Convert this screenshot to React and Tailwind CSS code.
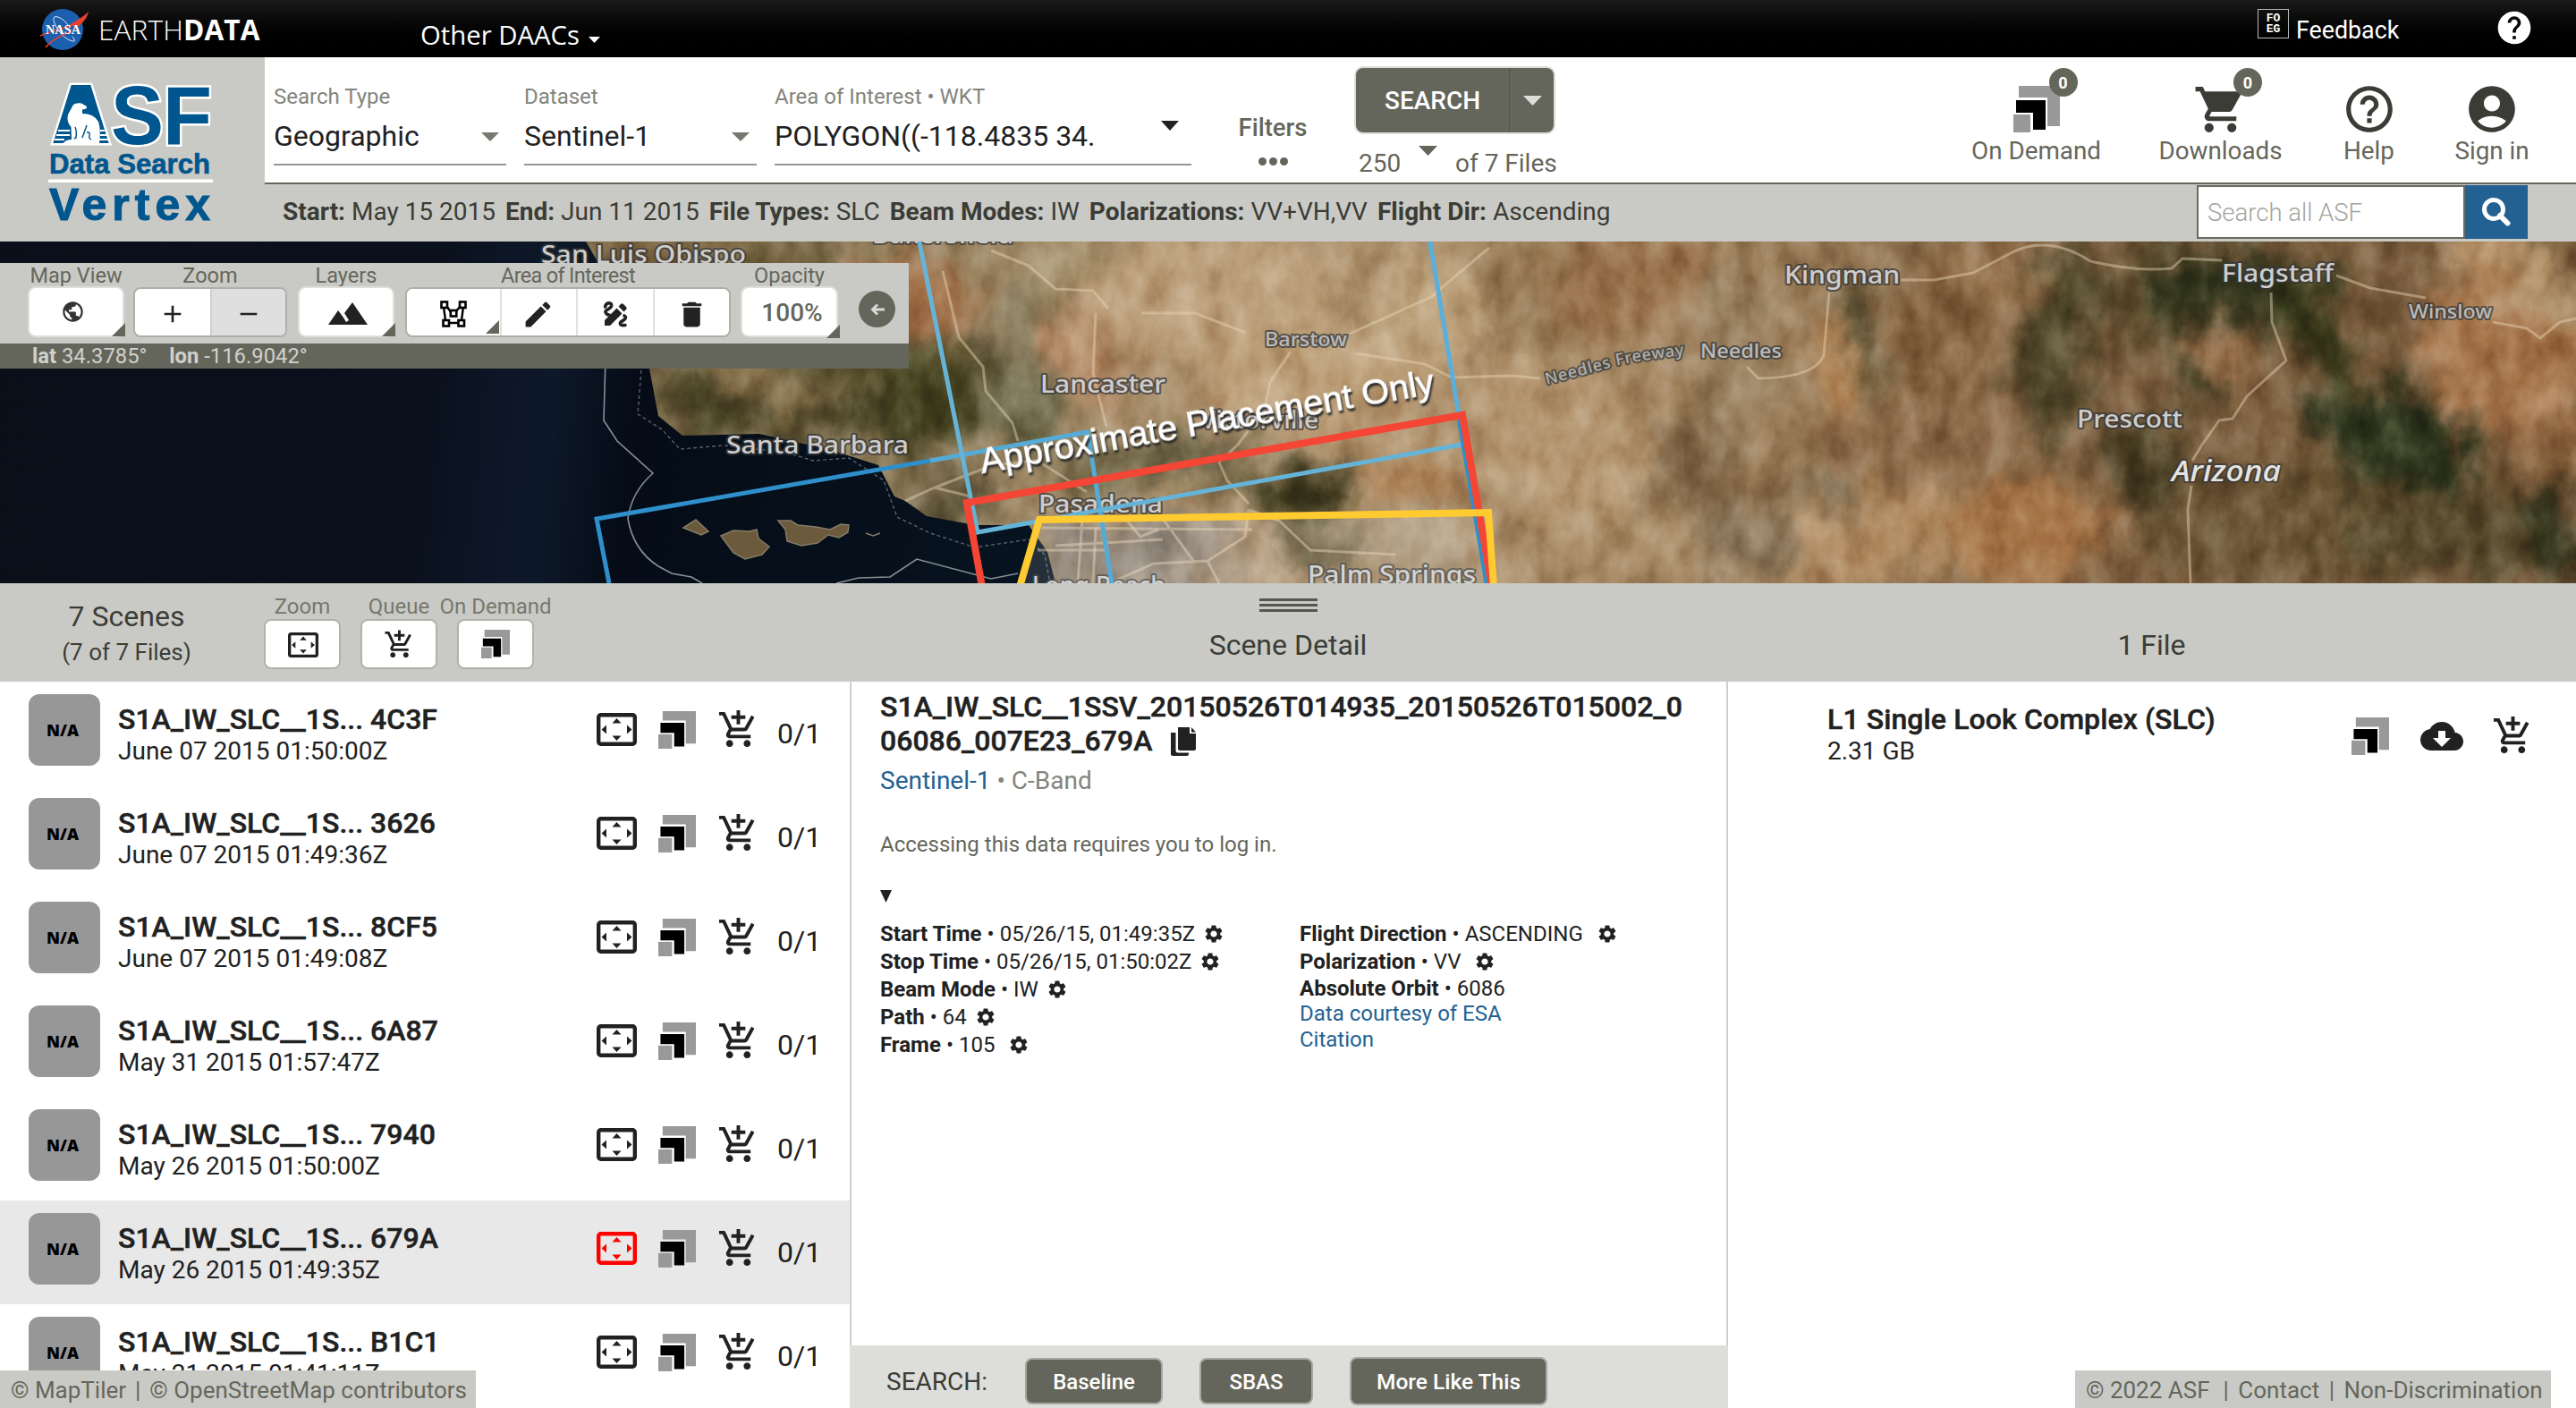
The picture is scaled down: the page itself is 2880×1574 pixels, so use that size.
import React from "react";
import {
  MdShoppingCart,
  MdHelpOutline,
  MdHelp,
  MdAccountCircle,
  MdPublic,
  MdAdd,
  MdRemove,
  MdEdit,
  MdDelete,
  MdSettings,
  MdCloudDownload,
  MdAddShoppingCart,
} from "react-icons/md";

function Caret({ className = "", w = 20, h = 11 }) {
  return (
    <svg className={className} width={w} height={h} viewBox="0 0 20 10" preserveAspectRatio="none">
      <path d="M0 0H20L10 10Z" fill="currentColor" />
    </svg>
  );
}

function OnDemandIcon({ size = 43 }) {
  return (
    <svg width={size} height={size} viewBox="0 0 52 52">
      <path d="M6 0H52V45H38V13H6Z" fill="#999" />
      <path d="M3 16H36V49H22V30H3Z" fill="#000" />
      <path d="M0 32H19V52H0Z" fill="#999" />
    </svg>
  );
}

function ZoomIcon({ width = 45, className = "" }) {
  return (
    <svg width={width} viewBox="0 0 45 37" className={`shrink-0 ${className}`}>
      <rect x="2.200" y="2.200" width="40.600" height="32.600" rx="2.500" fill="none" stroke="currentColor" strokeWidth="4.400" />
      <path d="M17.500 11.500L22.500 6L27.500 11.500ZM17.500 25.500H27.500L22.500 31ZM11 13.500V23.500L5.500 18.500ZM34 13.500V23.500L39.500 18.500Z" fill="currentColor" />
    </svg>
  );
}

function PolygonIcon() {
  return (
    <svg width="30" height="30" viewBox="0 0 30 30" fill="none" stroke="#000" strokeWidth="2.6">
      <path d="M8 7L12 13M22 7L18 12M4 7L6 22M26 7L24 22M8 25H21" strokeWidth="2.4" />
      <rect x="1.5" y="1.5" width="6.5" height="6.5" fill="#fff" />
      <rect x="22" y="1.5" width="6.5" height="6.5" fill="#fff" />
      <rect x="11.8" y="11" width="6.5" height="6.5" fill="#fff" />
      <rect x="3.5" y="22" width="6.5" height="6.5" fill="#fff" />
      <rect x="20.5" y="22" width="6.5" height="6.5" fill="#fff" />
    </svg>
  );
}

function DrawEditIcon() {
  return (
    <svg width="30" height="30" viewBox="0 0 30 30">
      <path d="M3.500 7C5 1 12 2 10.500 6.500C9 10 3 10 4 13Q5 16 8 16M25 17C29 19 24 22 21 24C19 27 22 28 26 27.500" fill="none" stroke="#222" strokeWidth="3.6" strokeLinecap="round" />
      <path d="M3 22L16.500 8.500L22.500 14.500L9 28H3ZM18.500 6.500L21 4Q22.500 2.500 24 4L27 7Q28.500 8.500 27 10L24.500 12.500Z" fill="#222" />
    </svg>
  );
}

function CopyIcon() {
  return (
    <svg width="28" height="32" viewBox="0 0 28 32" fill="#212121">
      <path d="M8 0H21V7H28V24Q28 26 26 26H10Q8 26 8 24Z" />
      <path d="M23 0L28 5.500H23Z" />
      <path d="M0 6H5.500V26Q5.500 28.500 8 28.500H20V30Q20 32 18 32H2Q0 32 0 30Z" />
    </svg>
  );
}

function NasaLogo() {
  return (
    <svg className="ml-[44px] mt-[9px] shrink-0" width="56" height="48" viewBox="0 0 56 48">
      <circle cx="26" cy="24" r="23" fill="#1c5fae" />
      <path d="M37 32Q42 38 37 37Q28 35 20 23Q12 9 19 9.500Q27 11 34 22" fill="none" stroke="#dfe9f5" strokeWidth="1" />
      <path d="M7 44C13 36 25 30 36 26" fill="none" stroke="#e6422e" strokeWidth="1.600" />
      <path d="M30 21C42 14 50 9 55 4C53 13 46 20 35 26C42 20 40 19 30 21Z" fill="#e6422e" />
      <path d="M1 31C12 26 22 24 34 20" stroke="#e6422e" strokeWidth="1.500" fill="none" />
      <text x="26.500" y="28.500" textAnchor="middle" textLength="39" lengthAdjust="spacingAndGlyphs" fontFamily="Liberation Serif, serif" fontWeight="700" fontSize="14" fill="#fff">NASA</text>
    </svg>
  );
}

function AsfLogo() {
  return (
    <svg width="296" height="206" viewBox="0 64 296 206" fontFamily="Liberation Sans, Arial, sans-serif" fontWeight="700">
      <path d="M79 94H102L123 161H58Z" fill="#fff" stroke="#fff" strokeWidth="3" />
      <g fill="#00568f">
        <text x="60" y="161" fontSize="92" textLength="62" lengthAdjust="spacingAndGlyphs">A</text>
        <path d="M79 94H102L123 161H58Z" stroke="#fff" strokeWidth="2" />
        <g fontSize="93" stroke="#fff" strokeWidth="5" paintOrder="stroke">
          <text x="124" y="161" textLength="59" lengthAdjust="spacingAndGlyphs">S</text>
          <text x="182" y="161" textLength="55" lengthAdjust="spacingAndGlyphs">F</text>
        </g>
        <text x="55" y="193.500" fontSize="31" textLength="180" lengthAdjust="spacingAndGlyphs" stroke="#00568f" strokeWidth="0.600">Data Search</text>
        <text x="55" y="245.500" fontSize="50" textLength="180" lengthAdjust="spacing" stroke="#00568f" strokeWidth="1">Vertex</text>
      </g>
      <path d="M65 146H78M63 151H78M61 156H72M112 146H117M112 151H119M110 156H121" stroke="#fff" strokeWidth="1.800" />
      <path d="M82 117Q85 114.500 91 115.500L97 119Q98 122 92 122.500V127Q105 127 110 136Q113 145 111 161H70Q73 156 80 156L79.500 142Q74 136 76 128Z" fill="#fff" />
      <path d="M84 142Q86 147 85 154L83 155M97 140L92 154M97 148Q101 147 100 152Q99 155 102 156" stroke="#00568f" strokeWidth="1.500" fill="none" />
      <rect x="54" y="200.500" width="184" height="3.500" fill="#fff" />
    </svg>
  );
}

const mapLabels = [
  ["San Luis Obispo", 605, 24, 229, 27],
  ["Santa Barbara", 812, 237, 204, 27],
  ["Bakersfield", 975, 2, 158, 27],
  ["Lancaster", 1163, 169, 140, 27],
  ["Barstow", 1414, 117, 92, 22],
  ["Victorville", 1342, 209, 132, 27],
  ["Pasadena", 1161, 303, 139, 27],
  ["Long Beach", 1154, 394, 149, 27],
  ["Palm Springs", 1462, 382, 188, 27],
  ["Needles", 1901, 130, 91, 22],
  ["Kingman", 1995, 47, 129, 27],
  ["Flagstaff", 2484, 45, 125, 27],
  ["Winslow", 2693, 86, 93, 22],
  ["Prescott", 2322, 208, 118, 27],
];

// [cx, cy, rx, ry, colour, rotation]
const terrain = [
  [800, 40, 160, 60, "#7c6542", 20],
  [950, 100, 190, 60, "#5d5330", 20],
  [900, 190, 170, 34, "#4a4425", 5],
  [860, 160, 70, 22, "#86704a", 30],
  [1010, 60, 90, 50, "#a07049", 0],
  [1030, 190, 60, 60, "#43401f", 0],
  [1060, 290, 60, 22, "#5b5338", 0],
  [1150, 100, 40, 60, "#857a5c", 30],
  [1180, 30, 60, 40, "#9f8a66", 0],
  [1140, 190, 60, 50, "#6d6849", 30],
  [1220, 120, 60, 60, "#b38b67", 0],
  [1350, 60, 150, 70, "#b99c77", 0],
  [1480, 150, 150, 60, "#b99b74", 0],
  [1290, 245, 110, 22, "#676042", -10],
  [1400, 270, 60, 20, "#69603f", -5],
  [1470, 280, 60, 30, "#3d391d", -8],
  [1580, 270, 60, 40, "#ad8459", 0],
  [1280, 350, 110, 45, "#85796b", 0],
  [1480, 345, 60, 22, "#5e5334", 10],
  [1590, 340, 60, 30, "#a99577", 0],
  [1600, 70, 60, 60, "#bca27c", 0],
  [1720, 60, 60, 70, "#92744f", 20],
  [1830, 50, 100, 60, "#97704a", 0],
  [1740, 220, 110, 90, "#b3956f", 30],
  [1890, 260, 40, 90, "#806646", 15],
  [1940, 110, 50, 100, "#9c8463", 0],
  [1860, 340, 110, 40, "#a98c67", 0],
  [2080, 100, 16, 75, "#4c4529", -10],
  [2060, 170, 28, 70, "#b08355", -15],
  [2180, 120, 60, 90, "#84613e", 0],
  [2300, 110, 36, 110, "#4d4528", 10],
  [2240, 40, 60, 30, "#94704b", 20],
  [2400, 60, 60, 70, "#5d4b2c", -20],
  [2490, 55, 90, 50, "#2f321a", 10],
  [2480, 130, 30, 50, "#98704b", 0],
  [2600, 110, 30, 100, "#363719", -25],
  [2450, 160, 16, 40, "#39391f", -20],
  [2680, 225, 100, 55, "#2c331b", 25],
  [2810, 120, 110, 90, "#a5744a", 30],
  [2790, 20, 60, 40, "#b8946a", 30],
  [2860, 60, 50, 36, "#a98a62", 0],
  [2400, 250, 40, 50, "#4a3f24", 0],
  [2150, 220, 110, 50, "#8e6c4b", 0],
  [2080, 330, 140, 50, "#b08a60", -10],
  [2270, 320, 80, 60, "#a47245", 0],
  [2040, 280, 40, 20, "#7c694d", 20],
  [2560, 320, 160, 70, "#6a5434", 0],
  [2740, 330, 110, 50, "#514427", 0],
  [2860, 330, 30, 50, "#2f301a", 0],
  [2860, 230, 60, 30, "#8f6741", 0],
  [1960, 330, 60, 50, "#8b7558", 0],
];

const roads = [
  "M2125 43L2162 43L2206 35L2250 12Q2290 -8 2337 22Q2387 34 2428 30L2440 19L2484 21",
  "M2612 38L2650 52L2712 63",
  "M2787 90L2825 97L2840 108L2862 90L2880 86",
  "M2539 57L2540 90L2556 133L2512 173L2496 198L2481 200L2462 227L2451 245",
  "M2450 273L2446 300L2449 382",
  "M2045 57L2039 127Q2030 152 1966 153L1953 140",
  "M1509 103L1600 62L1629 37L1665 7",
  "M1515 125L1593 137L1623 152L1689 150L1722 153",
  "M1108 10L1150 27L1180 53L1222 55L1239 75",
  "M1054 33L1072 107L1099 140L1102 167L1132 203L1138 223",
  "M1225 80L1222 147L1237 207",
  "M1276 80L1336 80L1393 102",
  "M1443 123L1420 157L1414 187L1384 227L1363 247L1372 267L1396 293",
  "M1165 320L1400 322M1210 310L1205 382M1160 345H1240M1300 310L1335 358L1350 357M1240 382L1290 360L1350 357L1392 330L1396 300M1350 357L1363 382M1396 300L1430 312L1465 345L1560 350",
  "M1012 290L1045 275L1085 285M1045 275L1110 250L1160 245L1215 280M1180 340L1300 333M1225 320L1222 382M1260 312L1275 330L1295 322",
];

function MapView() {
  return (
    <svg className="block" width="2880" height="382" viewBox="0 0 2880 382">
      <defs>
        <linearGradient id="ocean" x1="0" x2="1" y1="0" y2="0.030">
          <stop offset="0" stopColor="#0b0f1a" />
          <stop offset="0.380" stopColor="#0a101c" />
          <stop offset="0.440" stopColor="#0d1626" />
          <stop offset="0.490" stopColor="#0d1828" />
          <stop offset="0.560" stopColor="#050c17" />
          <stop offset="1" stopColor="#071521" />
        </linearGradient>
        <linearGradient id="land" x1="0" x2="1" y1="0" y2="0">
          <stop offset="0" stopColor="#6b5b3a" />
          <stop offset="0.200" stopColor="#8c7957" />
          <stop offset="0.350" stopColor="#b09470" />
          <stop offset="0.550" stopColor="#a1835e" />
          <stop offset="0.750" stopColor="#7b5e3e" />
          <stop offset="1" stopColor="#735637" />
        </linearGradient>
        <clipPath id="coast">
          <path d="M655 0L690 60L726 142L736 195L763 217L849 215L929 233L982 250L1000 285L1012 290L1036 307L1090 317L1150 317L1171 347L1180 382H2880V0Z" />
        </clipPath>
        <filter id="warp" filterUnits="userSpaceOnUse" x="560" y="-60" width="2380" height="500" colorInterpolationFilters="sRGB">
          <feGaussianBlur in="SourceGraphic" stdDeviation="14" result="b" />
          <feTurbulence type="fractalNoise" baseFrequency="0.018 0.015" numOctaves="6" seed="8" result="n" />
          <feDisplacementMap in="b" in2="n" scale="80" xChannelSelector="R" yChannelSelector="G" />
        </filter>
        <filter id="relief" x="0" y="0" width="100%" height="100%" colorInterpolationFilters="sRGB">
          <feTurbulence type="fractalNoise" baseFrequency="0.032 0.020" numOctaves="6" seed="11" />
          <feColorMatrix values="1.400 0 0 0 -0.150  1.400 0 0 0 -0.150  1.400 0 0 0 -0.150  0 0 0 0 1" />
        </filter>
      </defs>
      <rect width="1300" height="382" fill="url(#ocean)" />
      <g clipPath="url(#coast)">
        <rect x="600" width="2280" height="382" fill="url(#land)" />
        <g filter="url(#warp)">
          <rect x="500" y="-100" width="2500" height="600" fill="url(#land)" />
          {terrain.map(([cx, cy, rx, ry, c, r], i) => (
            <ellipse key={i} cx={cx} cy={cy} rx={rx} ry={ry} fill={c} transform={`rotate(${r} ${cx} ${cy})`} />
          ))}
        </g>
        <rect x="600" width="2280" height="382" filter="url(#relief)" className="mix-blend-soft-light" opacity="0.500" />
      </g>
      <g fill="none" stroke="#e8d5b5" strokeOpacity="0.450" strokeWidth="3" strokeLinejoin="round">
        {roads.map((d) => (
          <path key={d} d={d} />
        ))}
      </g>
      <g fill="#6b5a3c" stroke="#857b68" strokeWidth="1.500">
        <path d="M764 320L778 311L792 324L784 328Z" />
        <path d="M806 329L820 323L838 324L846 322L848 332L860 341L852 350L833 355L820 348Z" />
        <path d="M870 312L884 312L892 317L912 319L928 322L940 316L949 317L948 325L938 331L926 328L914 337L896 340L880 335L878 322Z" />
        <path d="M968 326L976 329L984 326" fill="none" />
      </g>
      <path d="M677 130L675 200L690 223L730 259Q706 280 702 310Q708 345 736 363L751 371L773 375L785 382M935 382L960 376L995 375L1025 355L1108 377L1138 371" fill="none" stroke="#868f95" strokeWidth="1.600" />
      <path d="M718 130L713 193L740 210L760 232L809 228L880 236L909 245L949 242L988 267L1003 308L1040 326L1090 342L1150 333L1168 350L1174 382" fill="none" stroke="#8d9aa3" strokeWidth="1.400" strokeDasharray="4 3" opacity="0.600" />

      <g fill="#d4d2d0" stroke="#35373a" strokeOpacity="0.700" strokeWidth="4" strokeLinejoin="round" paintOrder="stroke" fontFamily="Noto Sans, Open Sans, sans-serif" fontWeight="500">
        {mapLabels.map(([t, x, y, w, s]) => (
          <text key={t} x={x} y={y} fontSize={s} textLength={w} lengthAdjust="spacingAndGlyphs" fill={s < 25 ? "#b9bab9" : "#cfcdcb"}>
            {t}
          </text>
        ))}
        <text x="2428" y="268" fontSize="33" fontStyle="italic" textLength="122" lengthAdjust="spacingAndGlyphs" fill="#e6e4e2">Arizona</text>
        <path id="freeway" d="M1729 160Q1790 144 1810 138Q1840 132 1890 126" fill="none" stroke="none" />
        <text fontSize="18" fill="#aeb0ad">
          <textPath href="#freeway" textLength="158">Needles Freeway</textPath>
        </text>
      </g>

      <path d="M1162 310L1664 302L1670 382H1141Z" fill="#fff" opacity="0.120" />
      <g fill="none" strokeWidth="5">
        <path d="M681 382L667 310L1040 245" stroke="#2f8fcb" />
        <path d="M1040 245L1216 213L1243 382" stroke="#56abd6" />
        <path d="M1027 -4L1093 325L1634 227" stroke="#66b3d8" />
        <path d="M1598 -4L1632 200" stroke="#5aafdc" />
        <path d="M1631 197L1662 382" stroke="#2f8fcb" />
      </g>
      <path d="M1098 386L1081 292L1635 194L1668 386" fill="none" stroke="#f44535" strokeWidth="8" />
      <path d="M1140 386L1162 311L1664 303L1670 386" fill="none" stroke="#ffcb30" strokeWidth="8" />
      <g fontFamily="Liberation Sans, Helvetica, sans-serif" fontSize="38">
        <text transform="translate(1098 259) rotate(-10)" textLength="515" lengthAdjust="spacingAndGlyphs" fill="#fff" stroke="#fff" strokeWidth="0.800" className="[filter:drop-shadow(1px_3px_1px_#222)]">
          Approximate Placement Only
        </text>
      </g>
    </svg>
  );
}

function TopBar() {
  return (
    <div className="flex h-[64px] bg-gradient-to-b from-[#1a1a1a] to-black text-white font-['Open_Sans',sans-serif]">
      <NasaLogo />
      <div className="ml-[10px] w-[360px] text-[31.5px] leading-[66px] whitespace-nowrap tracking-[0.150px]">
        <span className="font-light">EARTH</span>
        <span className="font-bold">DATA</span>
      </div>
      <div className="flex">
        <span className="w-[178px] text-[29.3px] leading-[78px] whitespace-nowrap">Other DAACs</span>
        <Caret className="ml-[10px] mt-[41px]" w={13} h={7} />
      </div>
      <div className="ml-auto flex pr-[47px] font-[Roboto,sans-serif]">
        <div className="mt-[10px] flex h-[33px] w-[35px] flex-col items-center justify-center border border-[#bbb] font-['Liberation_Mono',monospace] text-[13px] font-bold leading-[12px]">
          <span>FO</span>
          <span>EG</span>
        </div>
        <span className="ml-[8px] w-[222px] text-[26.800px] leading-[69px]">Feedback</span>
        <MdHelp className="mt-[9px]" size={44} />
      </div>
    </div>
  );
}

function Field({ label, value, className = "", children }) {
  return (
    <div className={`h-[121px] border-b-2 border-[#969791] pt-[28px] ${className}`}>
      <div className="whitespace-nowrap text-[24px] leading-[32px] text-[#83847d]">{label}</div>
      <div className="mt-[8px] flex h-[40px]">
        <span className="overflow-hidden whitespace-nowrap text-[32px] leading-[40px] text-[#212121]">{value}</span>
        {children}
      </div>
    </div>
  );
}

function NavItem({ label, className, badge, children }) {
  return (
    <div className={`flex flex-col items-center text-[#3b3c36] ${className}`}>
      <div className="relative mt-[28px] flex h-[60px] items-center justify-center">
        {children}
        {badge && (
          <span className="absolute -right-[20px] -top-[16px] flex h-[32px] w-[32px] items-center justify-center rounded-full bg-[#65665b] text-[18px] font-bold text-white">0</span>
        )}
      </div>
      <span className="whitespace-nowrap text-[27.800px] leading-[33px] text-[#65665b]">{label}</span>
    </div>
  );
}

const filters = [
  ["Start:", "May 15 2015"],
  ["End:", "Jun 11 2015"],
  ["File Types:", "SLC"],
  ["Beam Modes:", "IW"],
  ["Polarizations:", "VV+VH,VV"],
  ["Flight Dir:", "Ascending"],
];

function Header() {
  return (
    <div className="flex h-[206px] bg-[#c9cac5]">
      <div className="w-[296px] shrink-0">
        <AsfLogo />
      </div>
      <div className="flex w-[2584px] flex-col">
        <div className="flex h-[142px] border-b-2 border-[#65665b] bg-white pl-[10px]">
          <Field label="Search Type" value="Geographic" className="w-[260px]">
            <Caret className="ml-auto mr-[8px] mt-[16px] text-[#77786f]" w={20} h={10} />
          </Field>
          <Field label="Dataset" value="Sentinel-1" className="ml-[20px] w-[260px]">
            <Caret className="ml-auto mr-[8px] mt-[16px] text-[#77786f]" w={20} h={10} />
          </Field>
          <Field label="Area of Interest • WKT" value={<span className="block w-[359px] overflow-hidden">POLYGON((-118.4835 34.</span>} className="ml-[20px] w-[466px]">
            <Caret className="ml-auto mr-[14px] mt-[3px] text-[#212121]" w={20} h={11} />
          </Field>
          <div className="ml-[52px] flex w-[78px] flex-col items-center pt-[62px] text-[#65665b]">
            <span className="text-[27.5px] font-medium leading-[33px]">Filters</span>
            <div className="mt-[17px] flex gap-[3px]">
              <i className="h-[9px] w-[9px] rounded-full bg-[#65665b]" />
              <i className="h-[9px] w-[9px] rounded-full bg-[#65665b]" />
              <i className="h-[9px] w-[9px] rounded-full bg-[#65665b]" />
            </div>
          </div>
          <div className="ml-[54px] w-[230px] pt-[12px]">
            <div className="flex h-[72px] w-[221px] items-center overflow-hidden rounded-[8px] bg-[#65665b] text-white shadow-[0_0_0_2px_#dcdcd8]">
              <span className="flex h-full w-[172px] items-center justify-center border-r border-[#54554b] pt-[1px] text-[28px] font-medium">SEARCH</span>
              <Caret className="ml-[15px] text-[#deded9]" w={21} h={11} />
            </div>
            <div className="mt-[18px] flex pl-[3px] text-[28px] leading-[33px] text-[#65665b]">
              <span className="w-[67px]">250</span>
              <Caret className="-mt-[3px]" w={21} h={11} />
              <span className="ml-[20px] whitespace-nowrap">of 7 Files</span>
            </div>
          </div>
          <div className="ml-auto flex pr-[53px]">
            <NavItem label="On Demand" className="mr-[65px] w-[145px]" badge>
              <OnDemandIcon size={52} />
            </NavItem>
            <NavItem label="Downloads" className="mr-[70px] w-[137px]" badge>
              <MdShoppingCart size={61} className="-mx-[4px]" />
            </NavItem>
            <NavItem label="Help" className="mr-[69px] w-[55px]">
              <MdHelpOutline size={62} />
            </NavItem>
            <NavItem label="Sign in" className="w-[82px]">
              <MdAccountCircle size={62} />
            </NavItem>
          </div>
        </div>
        <div className="flex h-[64px] pl-[20px] pr-[54px]">
          <div className="whitespace-nowrap text-[28px] leading-[61px] text-[#3b3c36]">
            {filters.map(([k, v]) => (
              <span key={k} className="mr-[11px]">
                <b className="font-bold">{k}</b> {v}
              </span>
            ))}
          </div>
          <div className="ml-auto mt-[1px] flex h-[60px] w-[370px]">
            <div className="w-[300px] border-2 border-[#6a6b65] bg-white pl-[10px] text-[27.500px] font-light leading-[57px] text-[#a3a49e]">Search all ASF</div>
            <div className="flex w-[70px] items-center justify-center bg-[#236192]">
              <svg width="32" height="32" viewBox="0 0 32 32" fill="none" stroke="#fff">
                <circle cx="13" cy="13" r="10.500" strokeWidth="5" />
                <path d="M20 20L28.500 28.500" strokeWidth="6" strokeLinecap="round" />
              </svg>
            </div>
          </div>
        </div>
      </div>
    </div>
  );
}

function Corner({ className }) {
  return (
    <svg className={`absolute ${className}`} width="15" height="15" viewBox="0 0 15 15">
      <path d="M15 0V15H0Z" fill="#65665b" />
    </svg>
  );
}

function ToolColumn({ label, className, labelClass = "", children }) {
  return (
    <div className={`flex flex-col items-center ${className}`}>
      <span className={`h-[26px] whitespace-nowrap text-[23.500px] leading-[28px] text-[#65665b] ${labelClass}`}>{label}</span>
      {children}
    </div>
  );
}

function Toolbar() {
  const single = "relative mt-[2px] flex h-[53px] w-full items-center justify-center rounded-[7px] bg-white shadow-[0_0_0_2px_#dededb]";
  const group = "mt-[1px] flex h-[56px] w-full overflow-hidden rounded-[8px] border-2 border-[#aeafa9] bg-white";
  return (
    <div className="absolute left-0 top-[24px] w-[1016px]">
      <div className="flex h-[90px] bg-[#c9cac5] pl-[33px]">
        <ToolColumn label="Map View" className="w-[104px]">
          <div className={single}>
            <MdPublic size={27} className="mr-[8px] text-[#333]" />
            <Corner className="-bottom-[1px] -right-[3px]" />
          </div>
        </ToolColumn>
        <ToolColumn label="Zoom" className="ml-[12px] w-[172px]">
          <div className={group}>
            <div className="flex w-1/2 items-center justify-center"><MdAdd size={32} className="mt-[4px] text-[#212121]" /></div>
            <div className="flex w-1/2 items-center justify-center border-l-2 border-[#cfcfcc] bg-[#dfdfdf]"><MdRemove size={32} className="mt-[4px] text-[#212121]" /></div>
          </div>
        </ToolColumn>
        <ToolColumn label="Layers" className="ml-[14px] w-[104px]">
          <div className={single}>
            <svg width="44" height="25" viewBox="0 0 44 25" fill="#222" className="ml-[4px] mt-[3px]"><path d="M27 0L44 25H0L11 9L17 17L20 22L23 20L18 12Z" /></svg>
            <Corner className="-bottom-[1px] -right-[3px]" />
          </div>
        </ToolColumn>
        <ToolColumn label="Area of Interest" labelClass="tracking-[-0.700px]" className="ml-[14px] w-[364px]">
          <div className={group}>
            <div className="relative flex w-[104px] items-center justify-center pt-[4px]"><PolygonIcon /><Corner className="bottom-[2px] right-[1px]" /></div>
            <div className="flex flex-1 items-center justify-center border-l-2 border-[#e0e0dd] pt-[4px]"><MdEdit size={37} className="mr-[3px] text-[#222]" /></div>
            <div className="flex flex-1 items-center justify-center border-l-2 border-[#e0e0dd] pt-[4px]"><DrawEditIcon /></div>
            <div className="flex flex-1 items-center justify-center border-l-2 border-[#e0e0dd] pt-[4px]"><MdDelete size={37} className="text-[#222]" /></div>
          </div>
        </ToolColumn>
        <ToolColumn label="Opacity" className="ml-[13px] w-[105px]">
          <div className={single}>
            <span className="ml-[6px] mt-[2px] text-[28px] font-medium text-[#65665b]">100%</span>
            <Corner className="-bottom-[3px] -right-[4px]" />
          </div>
        </ToolColumn>
        <div className="ml-[25px] mt-[31px] flex h-[41px] w-[41px] items-center justify-center rounded-full bg-[#65665b]">
          <svg width="16" height="14" viewBox="0 0 16 14" fill="none" stroke="#d8d8d4" strokeWidth="3">
            <path d="M16 7H3M8 1.500L2.500 7L8 12.500" />
          </svg>
        </div>
      </div>
      <div className="h-[28px] bg-[#65665b] pl-[36px] text-[23.800px] leading-[28px] text-[#d0d0cb]">
        <b className="font-bold">lat</b> 34.3785° <b className="ml-[19px] font-bold">lon</b> -116.9042°
      </div>
    </div>
  );
}

function PanelButton({ label, className, children }) {
  return (
    <div className={`flex w-[86px] flex-col items-center ${className}`}>
      <span className="h-[31px] whitespace-nowrap text-[24px] leading-[34px] text-[#77786d]">{label}</span>
      <div className="flex h-[56px] w-full items-center justify-center rounded-[8px] border-2 border-[#b1b2ab] bg-white text-[#212121]">{children}</div>
    </div>
  );
}

function PanelHeader() {
  return (
    <div className="flex h-[110px] bg-[#c9cac5] text-[#3b3c36]">
      <div className="flex w-[950px] pt-[9px]">
        <div className="ml-[51px] w-[181px] pt-[8px] text-center">
          <div className="text-[32px] leading-[40px]">7 Scenes</div>
          <div className="mt-[2px] text-[26px] leading-[36px]">(7 of 7 Files)</div>
        </div>
        <PanelButton label="Zoom" className="ml-[63px]"><ZoomIcon width={34} className="ml-[1px] mt-[2px]" /></PanelButton>
        <PanelButton label="Queue" className="ml-[22px]"><MdAddShoppingCart size={35} /></PanelButton>
        <PanelButton label="On Demand" className="ml-[22px]"><OnDemandIcon size={32} /></PanelButton>
      </div>
      <div className="flex w-[981px] flex-col items-center">
        <div className="mt-[17px] flex flex-col gap-[3px]">
          <i className="h-[3px] w-[65px] bg-[#55564d]" />
          <i className="h-[3px] w-[65px] bg-[#55564d]" />
          <i className="h-[3px] w-[65px] bg-[#55564d]" />
        </div>
        <div className="mr-[1px] mt-[17px] text-[32px] leading-[40px]">Scene Detail</div>
      </div>
      <div className="flex-1 pt-[49px] text-center text-[32px] leading-[40px]">1 File</div>
    </div>
  );
}

const scenes = [
  ["4C3F", "June 07 2015 01:50:00Z"],
  ["3626", "June 07 2015 01:49:36Z"],
  ["8CF5", "June 07 2015 01:49:08Z"],
  ["6A87", "May 31 2015 01:57:47Z"],
  ["7940", "May 26 2015 01:50:00Z"],
  ["679A", "May 26 2015 01:49:35Z"],
  ["B1C1", "May 21 2015 01:41:11Z"],
];

const strongTitle = "text-[32px] font-medium [-webkit-text-stroke:0.500px_#212121]";

function SceneRow({ id, date, selected }) {
  return (
    <div className={`flex h-[116px] shrink-0 pl-[32px] ${selected ? "bg-[#e8e8e8]" : ""}`}>
      <div className="mt-[14px] flex h-[80px] w-[80px] items-center justify-center rounded-[12px] bg-[#979797] pr-[4px] font-['Open_Sans',sans-serif] text-[18px] font-extrabold text-black">N/A</div>
      <div className="ml-[20px] w-[535px] pt-[22px] text-[#212121]">
        <div className={`leading-[40px] ${strongTitle}`}>S1A_IW_SLC__1S... {id}</div>
        <div className="text-[28px] leading-[32px]">{date}</div>
      </div>
      <ZoomIcon className={`mt-[35px] h-[37px] ${selected ? "text-[#ff0000]" : "text-[#212121]"}`} />
      <div className="ml-[24px] mt-[33px]"><OnDemandIcon size={42} /></div>
      <MdAddShoppingCart size={47} className="ml-[24px] mt-[30px] text-[#212121]" />
      <span className="ml-[20px] mt-[37px] text-[32px] leading-[42px] text-[#212121]">0/1</span>
    </div>
  );
}

function Meta({ label, value, gear, wide }) {
  return (
    <div className={`flex items-center whitespace-nowrap text-[24px] ${gear ? "h-[31.200px]" : "h-[29px]"}`}>
      <b className="font-bold">{label}</b>
      <span className="mx-[6px]">•</span>
      <span>{value}</span>
      {gear && <MdSettings size={24} className={wide ? "ml-[15px]" : "ml-[9px]"} />}
    </div>
  );
}

function SearchButton({ className, children }) {
  return (
    <span className={`flex items-center justify-center rounded-[8px] border-2 border-[#a5a69f] bg-[#65665b] pt-[2px] font-medium text-white ${className}`}>{children}</span>
  );
}

function SceneDetail() {
  return (
    <div className="flex w-[982px] flex-col border-x-2 border-[#cfcfcf] text-[#212121]">
      <div className="flex-1 pl-[32px] pt-[10px]">
        <div className={`leading-[37.500px] ${strongTitle}`}>
          S1A_IW_SLC__1SSV_20150526T014935_20150526T015002_0
          <div className="flex">
            06086_007E23_679A
            <span className="ml-[21px] mt-[3px]"><CopyIcon /></span>
          </div>
        </div>
        <div className="mt-[8px] text-[28px] leading-[36px] text-[#83847d]">
          <span className="text-[#236192]">Sentinel-1</span> • C-Band
        </div>
        <div className="mt-[37px] text-[24px] leading-[32px] text-[#65665b]">Accessing this data requires you to log in.</div>
        <Caret className="mt-[35px]" w={13} h={14} />
        <div className="mt-[19px] flex">
          <div className="w-[469px]">
            <Meta label="Start Time" value="05/26/15, 01:49:35Z" gear />
            <Meta label="Stop Time" value="05/26/15, 01:50:02Z" gear />
            <Meta label="Beam Mode" value="IW" gear />
            <Meta label="Path" value="64" gear />
            <Meta label="Frame" value="105" gear wide />
          </div>
          <div>
            <Meta label="Flight Direction" value="ASCENDING" gear wide />
            <Meta label="Polarization" value="VV" gear wide />
            <Meta label="Absolute Orbit" value="6086" />
            <div className="text-[24px] leading-[29px] text-[#236192]">Data courtesy of ESA</div>
            <div className="text-[24px] leading-[29px] text-[#236192]">Citation</div>
          </div>
        </div>
      </div>
      <div className="-mx-[2px] flex h-[70px] items-center bg-[#dddeda] pl-[41px] pt-[10px]">
        <span className="w-[155px] pt-[1px] text-[28px] text-[#3b3c36]">SEARCH:</span>
        <SearchButton className="h-[52px] w-[154px] text-[24px]">Baseline</SearchButton>
        <SearchButton className="ml-[41px] h-[52px] w-[127px] text-[24px]">SBAS</SearchButton>
        <SearchButton className="ml-[41px] h-[54px] w-[221px] text-[24.500px]">More Like This</SearchButton>
      </div>
    </div>
  );
}

function Files() {
  return (
    <div className="flex flex-1 pl-[111px] pt-[22px] text-[#212121]">
      <div className="w-[586px]">
        <div className={`leading-[40px] tracking-[0.100px] ${strongTitle}`}>L1 Single Look Complex (SLC)</div>
        <div className="text-[28px] leading-[32px]">2.31 GB</div>
      </div>
      <div className="mt-[18px]"><OnDemandIcon size={42} /></div>
      <MdCloudDownload size={48} className="ml-[35px] mt-[15px]" />
      <MdAddShoppingCart size={47} className="ml-[32px] mt-[15px]" />
    </div>
  );
}

export default function App() {
  return (
    <div className="relative flex h-[1574px] w-[2880px] flex-col overflow-hidden bg-white font-[Roboto,sans-serif]">
      <TopBar />
      <Header />
      <div className="relative h-[382px] overflow-hidden">
        <MapView />
        <Toolbar />
      </div>
      <PanelHeader />
      <div className="flex h-[812px]">
        <div className="flex w-[950px] flex-col overflow-hidden">
          {scenes.map(([id, date]) => (
            <SceneRow key={id} id={id} date={date} selected={id === "679A"} />
          ))}
        </div>
        <SceneDetail />
        <Files />
      </div>
      <div className="absolute bottom-0 left-0 h-[42px] w-[532px] whitespace-nowrap bg-[#c9cac5] pl-[12px] text-[26px] leading-[45px] text-[#65665b]">
        © MapTiler <span className="mx-[3.500px]">|</span> © OpenStreetMap contributors
      </div>
      <div className="absolute bottom-0 left-[2320px] flex h-[42px] w-[532px] whitespace-nowrap bg-[#c9cac5] pl-[12px] text-[26px] leading-[45px] text-[#65665b]">
        <span className="mr-[15px]">© 2022 ASF</span>
        <span>| <span className="ml-[4px]">Contact</span> <span className="mx-[4px]">|</span> Non-Discrimination</span>
      </div>
    </div>
  );
}
